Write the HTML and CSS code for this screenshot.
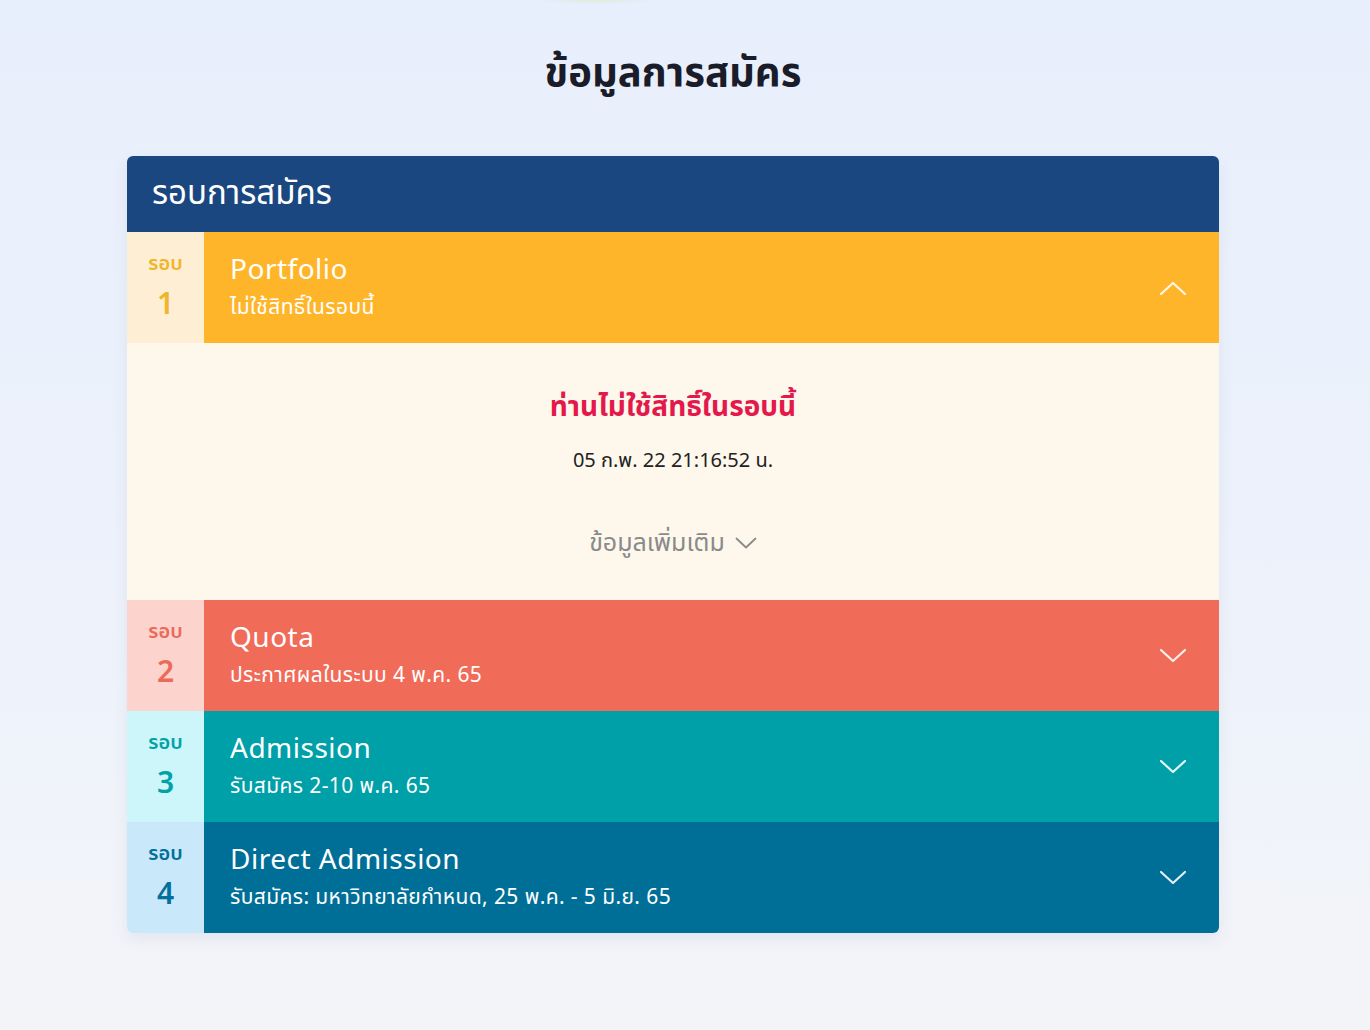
FILE: index.html
```html
<!DOCTYPE html>
<html lang="th">
<head>
<meta charset="utf-8">
<title>ข้อมูลการสมัคร</title>
<link rel="stylesheet" href="styles.css">
</head>
<body>
<div class="glow"></div>
<main class="page">
  <h1 class="page-title">ข้อมูลการสมัคร</h1>
  <section class="card">
    <header class="card-head">รอบการสมัคร</header>

    <div class="round r1">
      <div class="badge"><span class="badge-label">รอบ</span><span class="badge-num">1</span></div>
      <div class="round-main">
        <div class="round-text">
          <div class="round-name">Portfolio</div>
          <div class="round-sub">ไม่ใช้สิทธิ์ในรอบนี้</div>
        </div>
        <svg class="chev" viewBox="0 0 28 16" width="28" height="16"><path d="M2 14 L14 3 L26 14" fill="none" stroke="currentColor" stroke-width="2.2" stroke-linecap="round" stroke-linejoin="round"/></svg>
      </div>
    </div>
    <div class="detail">
      <div class="detail-title">ท่านไม่ใช้สิทธิ์ในรอบนี้</div>
      <div class="detail-date">05 ก.พ. 22 21:16:52 น.</div>
      <div class="detail-more">ข้อมูลเพิ่มเติม
        <svg class="more-chev" viewBox="0 0 22 12" width="22" height="12"><path d="M1.5 1.5 L11 10.5 L20.5 1.5" fill="none" stroke="currentColor" stroke-width="1.8" stroke-linecap="round" stroke-linejoin="round"/></svg>
      </div>
    </div>

    <div class="round r2">
      <div class="badge"><span class="badge-label">รอบ</span><span class="badge-num">2</span></div>
      <div class="round-main">
        <div class="round-text">
          <div class="round-name">Quota</div>
          <div class="round-sub">ประกาศผลในระบบ 4 พ.ค. 65</div>
        </div>
        <svg class="chev" viewBox="0 0 28 16" width="28" height="16"><path d="M2 2 L14 13 L26 2" fill="none" stroke="currentColor" stroke-width="2.2" stroke-linecap="round" stroke-linejoin="round"/></svg>
      </div>
    </div>

    <div class="round r3">
      <div class="badge"><span class="badge-label">รอบ</span><span class="badge-num">3</span></div>
      <div class="round-main">
        <div class="round-text">
          <div class="round-name">Admission</div>
          <div class="round-sub">รับสมัคร 2-10 พ.ค. 65</div>
        </div>
        <svg class="chev" viewBox="0 0 28 16" width="28" height="16"><path d="M2 2 L14 13 L26 2" fill="none" stroke="currentColor" stroke-width="2.2" stroke-linecap="round" stroke-linejoin="round"/></svg>
      </div>
    </div>

    <div class="round r4">
      <div class="badge"><span class="badge-label">รอบ</span><span class="badge-num">4</span></div>
      <div class="round-main">
        <div class="round-text">
          <div class="round-name">Direct Admission</div>
          <div class="round-sub">รับสมัคร: มหาวิทยาลัยกำหนด, 25 พ.ค. - 5 มิ.ย. 65</div>
        </div>
        <svg class="chev" viewBox="0 0 28 16" width="28" height="16"><path d="M2 2 L14 13 L26 2" fill="none" stroke="currentColor" stroke-width="2.2" stroke-linecap="round" stroke-linejoin="round"/></svg>
      </div>
    </div>
  </section>
</main>
</body>
</html>
```

FILE: styles.css
```css
html, body {
  margin: 0;
  padding: 0;
}
body {
  min-height: 1030px;
  background: linear-gradient(180deg, #e8effc 0%, #edf2fb 60%, #f3f4f8 100%);
  font-family: "Noto Sans Thai", "Noto Sans", "Liberation Sans", sans-serif;
  color: #1c2030;
  position: relative;
  overflow: hidden;
}
.glow {
  position: absolute;
  left: 530px;
  top: -10px;
  width: 130px;
  height: 14px;
  border-radius: 50%;
  background: radial-gradient(ellipse at center, rgba(244, 230, 150, 0.7), rgba(210, 236, 240, 0.35) 60%, rgba(232, 239, 252, 0) 100%);
}
.page {
  width: 1092px;
  margin: 0 auto;
  padding-top: 42px;
  position: relative;
  left: -12px;
}
.page-title {
  margin: 0;
  text-align: center;
  font-size: 40px;
  line-height: 64px;
  font-weight: 700;
  color: #1a1d29;
}
.card {
  margin-top: 50px;
  border-radius: 6px;
  overflow: hidden;
  box-shadow: 0 6px 16px rgba(60, 80, 120, 0.08);
}
.card-head {
  background: #1b4780;
  color: #ffffff;
  height: 76px;
  display: flex;
  align-items: center;
  padding-left: 25px;
  font-size: 33px;
  font-weight: 400;
}
.round {
  display: flex;
  height: 111px;
}
.badge {
  width: 77px;
  flex: none;
  display: flex;
  flex-direction: column;
  align-items: center;
  justify-content: center;
  padding-bottom: 2px;
  box-sizing: border-box;
  gap: 14px;
}
.badge-label {
  font-size: 20px;
  line-height: 22px;
  font-weight: 600;
}
.badge-num {
  font-size: 30px;
  line-height: 32px;
  font-weight: 600;
}
.round-main {
  flex: 1;
  display: flex;
  align-items: center;
  justify-content: space-between;
  padding: 0 32px 0 26px;
  color: #ffffff;
}
.round-text {
  display: flex;
  flex-direction: column;
  gap: 6px;
}
.round-name {
  font-size: 28px;
  line-height: 34px;
  letter-spacing: 0.5px;
}
.round-sub {
  font-size: 21px;
  line-height: 28px;
  letter-spacing: 0.4px;
}
.chev {
  color: #ffffff;
  opacity: 0.9;
}
.r1 .badge { background: #fdeed4; color: #f1b52c; }
.r1 .round-main { background: #ffb529; }
.r2 .badge { background: #fdd3ce; color: #ec6a58; }
.r2 .round-main { background: #f16b59; }
.r3 .badge { background: #cdf6fa; color: #00a2a8; }
.r3 .round-main { background: #00a0a8; }
.r4 .badge { background: #c9e9fb; color: #02709a; }
.r4 .round-main { background: #006f98; }

.detail {
  background: #fef8ec;
  height: 257px;
  display: flex;
  flex-direction: column;
  align-items: center;
  box-sizing: border-box;
  padding-top: 44px;
}
.detail-title {
  color: #e3194c;
  font-size: 28px;
  line-height: 42px;
  font-weight: 700;
}
.detail-date {
  margin-top: 18px;
  font-size: 20px;
  line-height: 28px;
  color: #222;
}
.detail-more {
  margin-top: 51px;
  font-size: 25px;
  line-height: 34px;
  color: #8a8a8a;
  display: flex;
  align-items: center;
  gap: 10px;
}
.more-chev {
  color: #8a8a8a;
}
```
